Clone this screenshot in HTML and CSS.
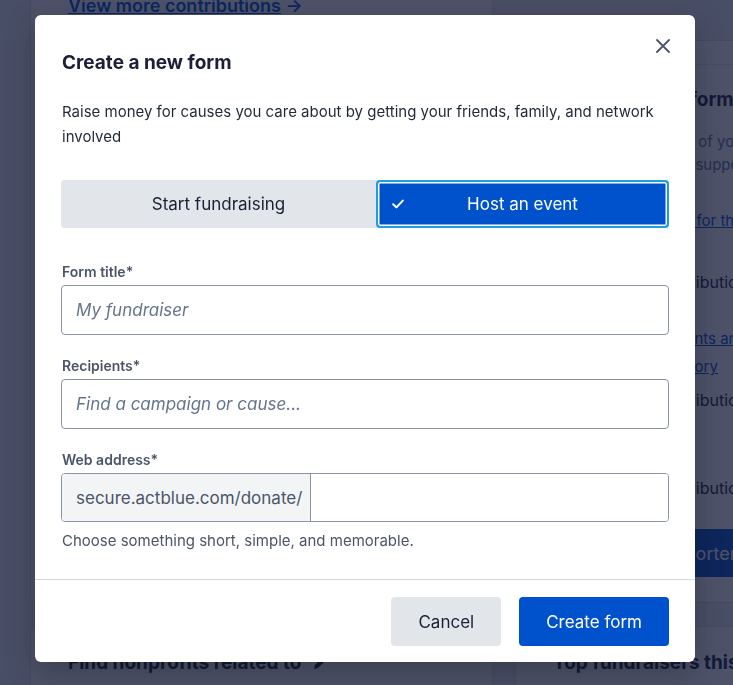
FILE: index.html
```html
<!DOCTYPE html>
<html lang="en">
<head>
    <meta charset="UTF-8">
    <meta name="viewport" content="width=device-width, initial-scale=1.0">
    <title>Create a new form</title>
    <link rel="stylesheet" href="styles.css">
</head>
<body>
    <div class="page">
        <div class="column main-column">
            <section class="card card-contributions">
                <a class="more-link" href="#">View more contributions</a> <span class="more-arrow">→</span>
            </section>
            <section class="card card-bottom">
                <h3 class="card-title">Find nonprofits related to
                    <svg class="pencil" width="16" height="16" viewBox="0 0 16 16"><path d="M2 14l1-4 8-8 3 3-8 8z" fill="#1a2035"/></svg>
                </h3>
            </section>
        </div>
        <aside class="column side-column">
            <section class="card side-card">
                <div class="side-tabs"></div>
                <h3 class="card-title">Create a basic form</h3>
                <p class="side-text">See the total impact of your fundraising<br>to each one of your supporters today</p>
                <a class="side-link" href="#">View all fundraisers for this page</a>
                <div class="side-row">$12,204 total contributions</div>
                <a class="side-link side-link-wrap" href="#">Learn about the events and<br>recurring giving history</a>
                <div class="side-row side-row-tight">$12,204 total contributions</div>
                <div class="side-row side-row-far">$12,204 total contributions</div>
                <button class="side-button">Become a supporter</button>
            </section>
            <section class="card card-bottom">
                <h3 class="card-title">Top fundraisers this week</h3>
            </section>
        </aside>
    </div>

    <div class="overlay">
        <div class="modal">
            <div class="modal-header">
                <h2 class="modal-title">Create a new form</h2>
                <button class="close-btn" aria-label="Close">
                    <svg width="14" height="14" viewBox="0 0 14 14"><path d="M1 1L13 13M13 1L1 13" stroke="#4a5568" stroke-width="1.8" stroke-linecap="round"/></svg>
                </button>
            </div>
            <div class="modal-body">
                <p class="intro">Raise money for causes you care about by getting your friends, family, and network involved</p>
                <div class="segmented">
                    <button class="segment">Start fundraising</button>
                    <button class="segment active">
                        <svg class="check" width="12" height="10" viewBox="0 0 12 10"><path d="M1.2 5.2L4.4 8.4L10.8 1.6" fill="none" stroke="#fff" stroke-width="2" stroke-linecap="round" stroke-linejoin="round"/></svg>
                        <span>Host an event</span>
                        <span></span>
                    </button>
                </div>
                <div class="field">
                    <label for="formTitle">Form title*</label>
                    <input class="text-input" id="formTitle" type="text" placeholder="My fundraiser">
                </div>
                <div class="field">
                    <label for="recipients">Recipients*</label>
                    <input class="text-input" id="recipients" type="text" placeholder="Find a campaign or cause...">
                </div>
                <div class="field">
                    <label for="webAddress">Web address*</label>
                    <div class="addon-input">
                        <span class="addon">secure.actblue.com/donate/</span>
                        <input id="webAddress" type="text">
                    </div>
                    <p class="hint">Choose something short, simple, and memorable.</p>
                </div>
            </div>
            <div class="modal-footer">
                <button class="btn btn-secondary">Cancel</button>
                <button class="btn btn-primary">Create form</button>
            </div>
        </div>
    </div>
</body>
</html>
```

FILE: styles.css
```css
body {
    font-family: 'Inter', 'Liberation Sans', sans-serif;
    background-color: #eceff3;
    color: #1a2035;
    margin: 0;
    height: 100vh;
    overflow: hidden;
}
button {
    font-family: inherit;
}

/* page behind the dialog */
.page {
    display: flex;
    gap: 22px;
    padding-left: 30px;
    margin-top: -20px;
}
.column {
    flex-shrink: 0;
}
.main-column {
    width: 463px;
}
.side-column {
    width: 270px;
    margin-top: 60px;
}
.card {
    background-color: #fff;
    border: 1px solid #d9dde3;
    border-radius: 6px;
    box-sizing: border-box;
}
.card-contributions {
    height: 623px;
    padding: 14px 37px;
    font-size: 18px;
    line-height: 22px;
    font-weight: 600;
}
.more-link {
    color: #0052cc;
}
.more-arrow {
    color: #0052cc;
}
.card-bottom {
    margin-top: 23px;
    padding: 24px 37px;
    height: 120px;
}
.card-title {
    margin: 0;
    font-size: 19px;
    line-height: 24px;
    font-weight: 700;
    white-space: nowrap;
}
.pencil {
    margin-left: 6px;
    vertical-align: -2px;
}
.side-card {
    height: 563px;
    padding: 0 37px;
}
.side-tabs {
    height: 23px;
    margin: 0 -37px 23px;
    border-bottom: 1px solid #e3e6ea;
}
.side-text {
    margin: 18px 0 0;
    font-size: 15px;
    line-height: 23px;
    color: #64748b;
    white-space: nowrap;
}
.side-link {
    display: block;
    margin-top: 34px;
    font-size: 15px;
    line-height: 22px;
    color: #0052cc;
    white-space: nowrap;
}
.side-link-wrap {
    margin-top: 32px;
    line-height: 28px;
}
.side-row {
    margin-top: 39px;
    font-size: 16px;
    line-height: 22px;
    white-space: nowrap;
}
.side-row-tight {
    margin-top: 8px;
}
.side-row-far {
    margin-top: 66px;
}
.side-button {
    display: block;
    width: 100%;
    height: 48px;
    margin-top: 30px;
    background-color: #0052cc;
    color: #fff;
    border: none;
    border-radius: 4px;
    font-size: 18px;
    white-space: nowrap;
}

/* dialog */
.overlay {
    position: fixed;
    inset: 0;
    background-color: rgba(17, 24, 55, 0.75);
    display: flex;
    align-items: flex-start;
    padding: 15px 0 0 35px;
}
.modal {
    width: 660px;
    background-color: #fff;
    border-radius: 6px;
    box-shadow: 0 10px 30px rgba(0, 0, 0, 0.25);
}
.modal-header {
    display: flex;
    justify-content: space-between;
    align-items: flex-start;
    padding: 17px 18px 0 27px;
}
.modal-title {
    margin: 19px 0 0;
    font-size: 19px;
    line-height: 24px;
    font-weight: 700;
    color: #1a2035;
}
.close-btn {
    width: 28px;
    height: 28px;
    padding: 0;
    border: none;
    background: none;
    display: flex;
    align-items: center;
    justify-content: center;
    cursor: pointer;
}
.modal-body {
    padding: 0 26px 28px;
}
.intro {
    margin: 24px 0 0 1px;
    font-size: 15px;
    line-height: 25px;
    color: #1f2937;
}
.segmented {
    display: grid;
    grid-template-columns: 315px 1fr;
    height: 48px;
    margin: 31px 0 35px;
    background-color: #e2e5ea;
    border-radius: 4px;
}
.segment {
    border: none;
    background: none;
    font-size: 17px;
    color: #1a2035;
    cursor: pointer;
}
.segment.active {
    display: grid;
    grid-template-columns: 1fr auto 1fr;
    align-items: center;
    padding: 0 14px;
    background-color: #0052cc;
    color: #fff;
    border: 2px solid #1ba0dc;
    border-radius: 4px;
    box-shadow: inset 0 0 0 1.5px #fff;
}
.check {
    justify-self: start;
}
.field {
    margin-top: 22px;
}
.field label {
    display: block;
    margin: 0 0 4px 1px;
    font-size: 14px;
    line-height: 18px;
    font-weight: 600;
    color: #4a5568;
}
.text-input {
    display: block;
    width: 100%;
    height: 50px;
    box-sizing: border-box;
    padding: 0 14px;
    border: 1px solid #8a94a6;
    border-radius: 4px;
    font-family: inherit;
    font-size: 17px;
    color: #1a2035;
}
.text-input::placeholder {
    font-style: italic;
    color: #64748b;
}
.addon-input {
    display: flex;
    height: 49px;
    box-sizing: border-box;
    border: 1px solid #8a94a6;
    border-radius: 4px;
    overflow: hidden;
}
.addon {
    display: flex;
    align-items: center;
    padding: 0 8px 0 14px;
    background-color: #f3f4f6;
    border-right: 1px solid #8a94a6;
    font-size: 17px;
    color: #4a5568;
}
.addon-input input {
    flex: 1;
    border: none;
    font-family: inherit;
    font-size: 17px;
}
.hint {
    margin: 9px 0 0 1px;
    font-size: 15px;
    line-height: 20px;
    color: #4a5568;
}
.modal-footer {
    display: flex;
    justify-content: flex-end;
    gap: 18px;
    padding: 17px 26px 16px;
    border-top: 1px solid #d5d9df;
}
.btn {
    height: 49px;
    padding: 0 27px;
    border: none;
    border-radius: 4px;
    font-size: 17px;
    cursor: pointer;
}
.btn-secondary {
    background-color: #e2e5ea;
    color: #1a2035;
}
.btn-primary {
    background-color: #0052cc;
    color: #fff;
}
```
